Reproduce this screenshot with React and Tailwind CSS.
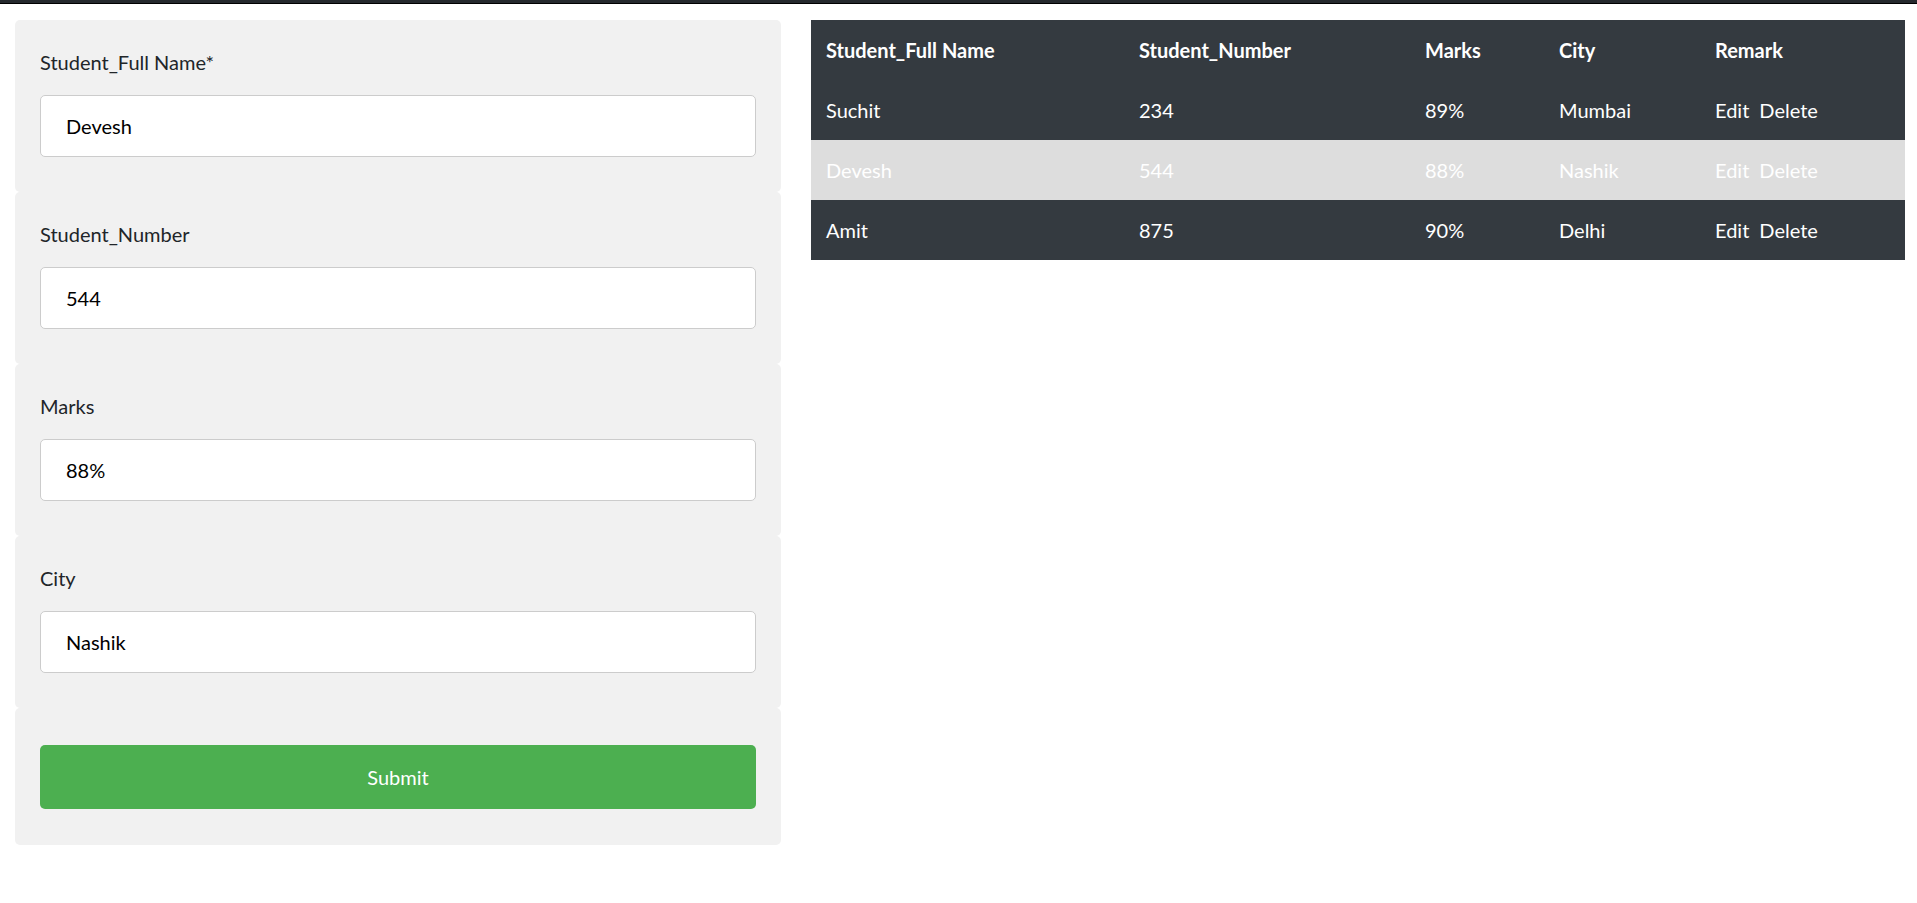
import React from "react";

// form fields shown on the left
const fields = [
    { label: "Student_Full Name*", value: "Devesh" },
    { label: "Student_Number", value: "544" },
    { label: "Marks", value: "88%" },
    { label: "City", value: "Nashik" },
];

const students = [
    { name: "Suchit", number: "234", marks: "89%", city: "Mumbai" },
    { name: "Devesh", number: "544", marks: "88%", city: "Nashik", selected: true },
    { name: "Amit", number: "875", marks: "90%", city: "Delhi" },
];

export default function App() {
    return (
        <div className="min-h-screen bg-white text-[20px] text-[#212529] font-['Segoe_UI','Lato',sans-serif]">
            {/* top strip */}
            <div className="h-[4px] bg-[#25292d] border-b border-black" />

            <div className="flex items-start gap-[30px] pl-[15px] pt-[16px]">
                {/* ===== FORM ===== */}
                <form className="w-[766px] shrink-0" onSubmit={(e) => e.preventDefault()}>
                    {fields.map((f, i) => (
                        <div key={i} className="bg-[#f1f1f1] rounded-[5px] px-[25px] pt-[25px] pb-[25px]">
                            <label className="block leading-[27px] pt-[4px] h-[40px]">{f.label}</label>
                            <input
                                type="text"
                                defaultValue={f.value}
                                className="block w-full h-[62px] my-[10px] px-[25px] bg-white border border-[#cccccc] rounded-[5px] text-black outline-none"
                            />
                        </div>
                    ))}
                    <div className="bg-[#f1f1f1] rounded-[5px] px-[25px] pt-[27px] pb-[26px]">
                        <button
                            type="submit"
                            className="block w-full h-[64px] my-[10px] bg-[#4caf50] text-white rounded-[5px]"
                        >
                            Submit
                        </button>
                    </div>
                </form>

                {/* ===== TABLE ===== */}
                <table className="w-[1094px] border-collapse text-white leading-[30px]">
                    <thead className="bg-[#343a40]">
                        <tr className="h-[60px]">
                            <th className="w-[313px] px-[15px] text-left font-bold">Student_Full Name</th>
                            <th className="w-[286px] px-[15px] text-left font-bold">Student_Number</th>
                            <th className="w-[134px] px-[15px] text-left font-bold">Marks</th>
                            <th className="w-[156px] px-[15px] text-left font-bold">City</th>
                            <th className="px-[15px] text-left font-bold">Remark</th>
                        </tr>
                    </thead>
                    <tbody>
                        {students.map((s, i) => (
                            <tr key={i} className={`h-[60px] ${s.selected ? "bg-[#dddddd]" : "bg-[#343a40]"}`}>
                                <td className="px-[15px]">{s.name}</td>
                                <td className="px-[15px]">{s.number}</td>
                                <td className="px-[15px]">{s.marks}</td>
                                <td className="px-[15px]">{s.city}</td>
                                <td className="px-[15px]">
                                    <span className="mr-[10px]">Edit</span>
                                    <span>Delete</span>
                                </td>
                            </tr>
                        ))}
                    </tbody>
                </table>
            </div>
        </div>
    );
}
